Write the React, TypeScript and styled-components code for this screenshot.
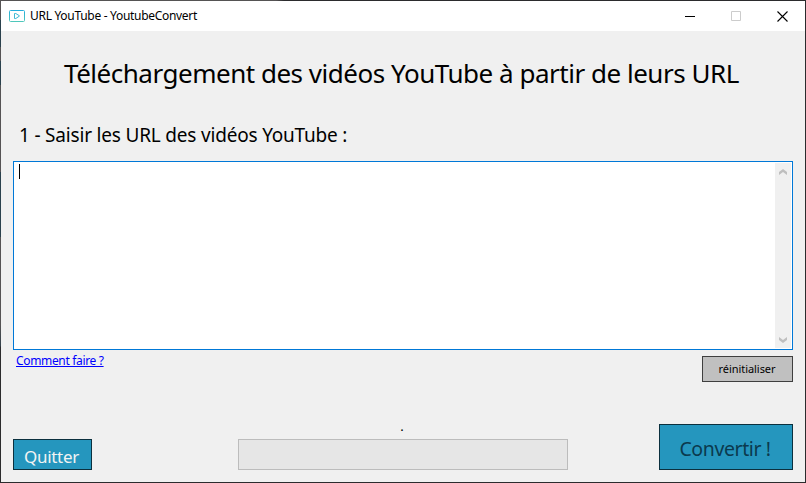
import React from "react";
import styled, { createGlobalStyle } from "styled-components";

const GlobalStyle = createGlobalStyle`
  body { margin: 0; overflow: hidden; }
  * { box-sizing: border-box; }
`;

const Window = styled.main`
  width: 806px;
  height: 483px;
  display: flex;
  flex-direction: column;
  color: #000;
  font-family: "Noto Sans", "Open Sans", sans-serif;
  padding: 1px;
  background:
    linear-gradient(90deg, #555354 0 276px, #2b2b2d 284px) 0 0 / 100% 1px no-repeat,
    linear-gradient(
      #555354 0 20px, #2a414d 20px 47px, #555354 47px 61px, #2a414d 61px 85px,
      #555354 85px 172px, #2a414d 172px 237px, #555354 237px 325px,
      #33414b 346px, #2b2b2d 347px
    ) 0 0 / 1px 100% no-repeat,
    #2b2b2d;
`;

const TitleBar = styled.header`
  height: 30px;
  flex: none;
  display: flex;
  align-items: center;
  background: #fff;
  padding-left: 8px;
`;

const Label = styled.span<{ $size: number; $spacing?: number }>`
  display: block;
  font-size: ${(p) => p.$size}px;
  letter-spacing: ${(p) => p.$spacing ?? 0}px;
  white-space: nowrap;
`;

const Caption = styled(Label)`
  flex: 1;
  margin-left: 5px;
  line-height: 30px;
`;

const WindowButton = styled.button`
  width: 46px;
  height: 30px;
  padding: 0;
  border: 0;
  background: transparent;
  display: flex;
  align-items: center;
  justify-content: center;
  & svg { display: block; }
`;

const Content = styled.section`
  flex: 1;
  display: flex;
  flex-direction: column;
  padding: 0 12px 12px;
  background: #f0f0f0;
`;

const Heading = styled(Label).attrs({ as: "h1" })`
  margin: 22px 0 0 51px;
  font-weight: 400;
  line-height: 40px;
`;

const Step = styled(Label).attrs({ as: "h2" })`
  margin: 27px 0 0 6px;
  font-weight: 400;
  line-height: 30px;
  height: 41px;
`;

const UrlField = styled.div`
  height: 189px;
  flex: none;
  display: flex;
  justify-content: space-between;
  padding: 1px;
  background: #fff;
  border: 1px solid #0078d7;
`;

const Caret = styled.i`
  width: 1px;
  height: 15px;
  margin: 1px 0 0 4px;
  background: #000;
`;

const ScrollBar = styled.div`
  width: 16px;
  display: flex;
  flex-direction: column;
  justify-content: space-between;
  align-items: center;
  padding: 6px 0 5px;
  background: #f0f0f0;
`;

const HelpRow = styled.div`
  display: flex;
  justify-content: space-between;
  align-items: flex-start;
  height: 74px;
  padding-top: 6px;
`;

const HelpLink = styled.a`
  display: block;
  margin: -4px 0 0 3px;
  color: #0000ff;
  text-decoration: underline;
  text-decoration-thickness: 1px;
  text-underline-offset: 1px;
  line-height: 18px;
`;

const Button = styled.button<{ $w: number; $h: number; $tone?: "plain" | "dark" | "light" }>`
  width: ${(p) => p.$w}px;
  height: ${(p) => p.$h}px;
  flex: none;
  padding: 0;
  display: flex;
  justify-content: center;
  align-items: center;
  font-family: inherit;
  border: 1px solid ${(p) => (p.$tone === "plain" ? "#3f3f3f" : "#0b303e")};
  background: ${(p) => (p.$tone === "plain" ? "#c0c0c0" : "#2596be")};
  color: ${(p) => (p.$tone === "plain" ? "#000" : p.$tone === "dark" ? "#0b3a4e" : "#f3f3f3")};
`;

const ActionLabel = styled(Label)`
  padding: 4px 2px 0 0;
  line-height: 26px;
`;

const ResetLabel = styled(Label)`
  padding-right: 1px;
  line-height: 14px;
  margin-top: -1px;
`;

const Actions = styled.footer`
  display: flex;
  justify-content: space-between;
  align-items: flex-end;
  height: 46px;
`;

const Progress = styled.div`
  width: 330px;
  display: flex;
  flex-direction: column;
  margin-left: 55px;
`;

const Status = styled(Label)`
  text-align: center;
  line-height: 14px;
  height: 20px;
  padding-right: 2px;
`;

const Track = styled.div`
  height: 31px;
  border: 1px solid #bcbcbc;
  background: #e6e6e6;
`;

const AppIcon = () => (
  <svg width="16" height="12" viewBox="0 0 16 12" fill="none">
    <defs>
      <linearGradient id="frame" x1="0" y1="0" x2="0" y2="1">
        <stop stopColor="#24addb" />
        <stop offset="1" stopColor="#4fc7bb" />
      </linearGradient>
    </defs>
    <rect x=".5" y=".5" width="15" height="11" rx="1" stroke="url(#frame)" />
    <path d="M5.5 3.5v5h1.3l3.5-2.3v-.5L6.8 3.5z" stroke="#3db8d3" />
  </svg>
);

const Chevron = ({ down }: { down?: boolean }) => (
  <svg width="8" height="6" viewBox="0 0 8 6">
    <path
      d={down ? "M0 0L4 3L8 0V3L4 6L0 3Z" : "M0 6L4 3L8 6V3L4 0L0 3Z"}
      fill="#bfbfbf"
    />
  </svg>
);

export default function App() {
  return (
    <>
      <GlobalStyle />
      <Window>
        <TitleBar>
          <AppIcon />
          <Caption $size={12} $spacing={-0.3}>URL YouTube - YoutubeConvert</Caption>
          <WindowButton aria-label="Réduire">
            <svg width="10" height="10"><path d="M0 5.5H10" stroke="#000" /></svg>
          </WindowButton>
          <WindowButton aria-label="Agrandir" disabled>
            <svg width="10" height="10"><path d="M.5 .5H9.5V9.5H.5Z" fill="none" stroke="#ccc" /></svg>
          </WindowButton>
          <WindowButton aria-label="Fermer">
            <svg width="11" height="11"><path d="M.5 .5L10.5 10.5M10.5 .5L.5 10.5" stroke="#000" strokeWidth="1.1" /></svg>
          </WindowButton>
        </TitleBar>
        <Content>
          <Heading $size={26} $spacing={-0.48}>Téléchargement des vidéos YouTube à partir de leurs URL</Heading>
          <Step $size={19} $spacing={-0.19}>1 - Saisir les URL des vidéos YouTube :</Step>
          <UrlField>
            <Caret />
            <ScrollBar>
              <Chevron />
              <Chevron down />
            </ScrollBar>
          </UrlField>
          <HelpRow>
            <HelpLink href="#"><Label as="span" $size={12} $spacing={-0.34}>Comment faire ?</Label></HelpLink>
            <Button $w={91} $h={26} $tone="plain"><ResetLabel $size={11} $spacing={-0.05}>réinitialiser</ResetLabel></Button>
          </HelpRow>
          <Actions>
            <Button $w={79} $h={31} $tone="light"><ActionLabel $size={17} $spacing={-0.3}>Quitter</ActionLabel></Button>
            <Progress>
              <Status $size={13}>.</Status>
              <Track />
            </Progress>
            <Button $w={134} $h={46} $tone="dark"><ActionLabel $size={19.5} $spacing={-0.4}>Convertir !</ActionLabel></Button>
          </Actions>
        </Content>
      </Window>
    </>
  );
}
